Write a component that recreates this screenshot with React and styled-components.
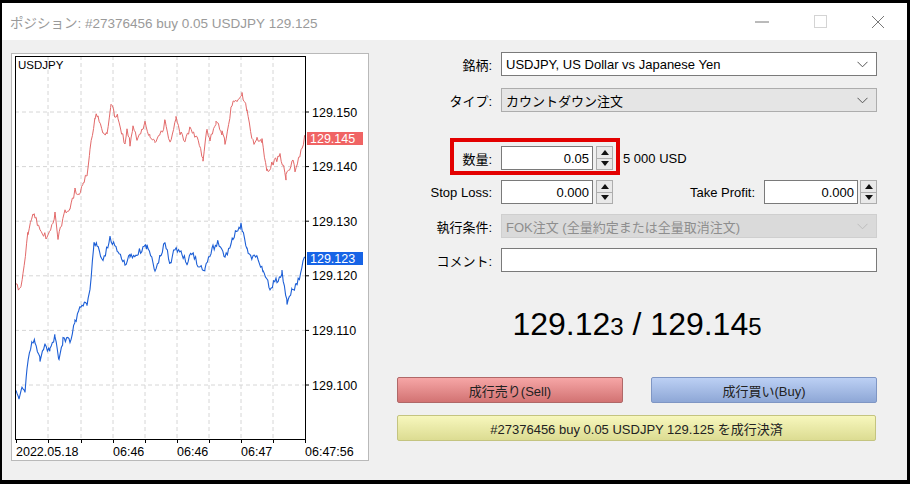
import React from "react";
import styled, { createGlobalStyle } from "styled-components";

const GlobalStyle = createGlobalStyle`
  html, body { margin: 0; padding: 0; background: #000; }
  body {
    font-family: "Liberation Sans", "Noto Sans CJK JP", sans-serif;
    font-size: 12.5px;
    color: #000;
  }
`;

// chart keypoints in page coordinates (x, y)
const RED = [[16,287],[21,287],[23,275],[28,233],[33,215],[35,215],[40,232],[47,237],[55,215],[58,240],[65,210],[70,210],[75,190],[78,197],[83,182],[87,175],[90,147],[95,117],[98,117],[104,133],[107,133],[111,106],[115,115],[118,118],[125,143],[127,128],[130,143],[133,128],[137,138],[142,128],[145,123],[150,137],[155,143],[160,137],[165,122],[170,143],[176,117],[180,133],[185,140],[190,128],[197,137],[203,158],[207,128],[210,140],[216,122],[222,132],[225,143],[232,103],[237,100],[242,94],[247,110],[254,147],[257,138],[262,140],[267,170],[272,165],[280,155],[286,177],[293,160],[295,172],[305,137]];
const BLUE = [[16,390],[19,402],[22,390],[25,390],[27,367],[32,342],[35,342],[40,360],[45,347],[50,350],[55,337],[59,362],[63,340],[70,340],[75,323],[82,303],[87,303],[90,288],[94,242],[97,245],[103,263],[110,237],[118,253],[125,263],[130,257],[137,253],[147,247],[155,268],[160,258],[165,242],[170,263],[175,248],[182,253],[187,263],[192,253],[200,268],[205,268],[213,248],[218,242],[225,258],[233,237],[241,226],[247,250],[252,260],[257,253],[263,273],[270,287],[277,280],[282,273],[287,302],[292,290],[297,285],[305,257]];

function rng(seed) {
  let a = seed;
  return () => {
    a |= 0; a = (a + 0x6d2b79f5) | 0;
    let t = Math.imul(a ^ (a >>> 15), 1 | a);
    t = (t + Math.imul(t ^ (t >>> 7), 61 | t)) ^ t;
    return ((t ^ (t >>> 14)) >>> 0) / 4294967296;
  };
}

function jagged(points, seed) {
  const r = rng(seed);
  const out = [];
  for (let i = 0; i < points.length - 1; i++) {
    const [x0, y0] = points[i];
    const [x1, y1] = points[i + 1];
    for (let x = x0; x < x1; x += 1.2) {
      const t = (x - x0) / (x1 - x0);
      const y = y0 + (y1 - y0) * t + (r() - 0.5) * 6.5;
      out.push(`${x.toFixed(1)},${y.toFixed(1)}`);
    }
  }
  const last = points[points.length - 1];
  out.push(`${last[0]},${last[1]}`);
  return out.join(" ");
}

const redLine = jagged(RED, 7);
const blueLine = jagged(BLUE, 13);

const PRICES = ["129.150", "129.140", "129.130", "129.120", "129.110", "129.100"];
const priceY = (p) => 112 + (129.15 - p) * 5460;
const VGRID = [48, 81, 113, 145, 177, 209, 241, 273];
const TIMES = [
  { x: 16, t: "2022.05.18" },
  { x: 113, t: "06:46" },
  { x: 177, t: "06:46" },
  { x: 241, t: "06:47" },
  { x: 305, t: "06:47:56" },
];

const Screen = styled.div`
  width: 910px;
  height: 484px;
  box-sizing: border-box;
  padding: 3px 3px 4px 2px;
  background: #000;
`;

const Window = styled.div`
  width: 905px;
  height: 477px;
  background: #f0f0f0;
  display: flex;
  flex-direction: column;
`;

const TitleBar = styled.div`
  height: 37px;
  background: #fff;
  display: flex;
  align-items: center;
`;

const Title = styled.div`
  flex: 1;
  padding-left: 8px;
  font-size: 13.5px;
  color: #9a9a9a;
`;

const WinButton = styled.div`
  width: 58px;
  height: 37px;
  display: flex;
  align-items: center;
  justify-content: center;
`;

const Body = styled.div`
  display: flex;
  gap: 28px;
  padding: 12px 30px 0 9px;
`;

const ChartPanel = styled.div`
  width: 358px;
  height: 408px;
  margin-top: 1px;
  box-sizing: border-box;
  border: 1px solid #b9b9b9;
  background: #fff;
  svg { display: block; }
`;

const RightPanel = styled.div`
  width: 480px;
  display: flex;
  flex-direction: column;
`;

const Row = styled.div`
  position: relative;
  display: flex;
  align-items: center;
  height: 24px;
  margin-top: ${(p) => p.$top || 0}px;
`;

const Label = styled.div`
  width: 95px;
  flex-shrink: 0;
  text-align: right;
  margin-right: 9px;
  font-size: 13px;
  white-space: nowrap;
`;

const Field = styled.div`
  flex: 1;
  height: 24px;
  box-sizing: border-box;
  display: flex;
  align-items: center;
  padding: 0 8px 0 4px;
  border: 1px solid ${(p) => (p.$variant === "disabled" ? "#cfcfcf" : p.$variant === "gray" ? "#adadad" : "#7a7a7a")};
  background: ${(p) => (p.$variant === "disabled" ? "#dadada" : p.$variant === "gray" ? "#e5e5e5" : "#fff")};
  color: ${(p) => (p.$variant === "disabled" ? "#8e8e8e" : "#000")};
  font-size: 13px;
  span { flex: 1; white-space: nowrap; }
`;

const NumInput = styled.div`
  width: ${(p) => p.$w}px;
  height: 24px;
  box-sizing: border-box;
  border: 1px solid #7a7a7a;
  background: #fff;
  display: flex;
  align-items: center;
  justify-content: flex-end;
  padding-right: 3px;
  font-size: 13px;
`;

const SpinBox = styled.div`
  width: 17px;
  height: 24px;
  margin-left: ${(p) => p.$gap}px;
  box-sizing: border-box;
  border: 1px solid #adadad;
  background: #e9e9e9;
  display: flex;
  flex-direction: column;
`;

const SpinHalf = styled.div`
  flex: 1;
  display: flex;
  align-items: center;
  justify-content: center;
  & + & { border-top: 1px solid #adadad; }
`;

const Note = styled.div`
  margin-left: 10px;
  font-size: 13px;
`;

const Spacer = styled.div`
  flex: 1;
  text-align: right;
  margin-right: 9px;
  font-size: 13px;
`;

const Highlight = styled.div`
  position: absolute;
  left: 53px;
  top: -8px;
  width: 170px;
  height: 37px;
  box-sizing: border-box;
  border: 4px solid #e30000;
  pointer-events: none;
`;

const Quote = styled.div`
  margin-top: 33px;
  height: 38px;
  line-height: 38px;
  text-align: center;
  font-size: 32px;
  white-space: pre;
  small { font-size: 24px; }
`;

const ButtonRow = styled.div`
  display: flex;
  gap: 28px;
  margin-top: 34px;
`;

const TradeButton = styled.div`
  flex: 1;
  height: 26px;
  box-sizing: border-box;
  border-radius: 2px;
  display: flex;
  align-items: center;
  justify-content: center;
  font-size: 13px;
  color: #222;
  border: 1px solid ${(p) => p.$border};
  background: linear-gradient(${(p) => p.$top}, ${(p) => p.$bottom});
`;

const CloseButton = styled(TradeButton)`
  flex: none;
  margin-top: 12px;
  width: 479px;
`;

const Chevron = ({ color = "#555" }) => (
  <svg width="11" height="7" viewBox="0 0 11 7">
    <path d="M0.5 0.8 L5.5 5.8 L10.5 0.8" fill="none" stroke={color} strokeWidth="1" />
  </svg>
);

const Spinner = ({ gap = 3 }) => (
  <SpinBox $gap={gap}>
    <SpinHalf>
      <svg width="8" height="5" viewBox="0 0 8 5"><path d="M4 0 L8 5 L0 5 Z" fill="#111" /></svg>
    </SpinHalf>
    <SpinHalf>
      <svg width="8" height="5" viewBox="0 0 8 5"><path d="M0 0 L8 0 L4 5 Z" fill="#111" /></svg>
    </SpinHalf>
  </SpinBox>
);

function Chart() {
  return (
    <svg width="356" height="406" viewBox="12 54 356 406" fontFamily="Liberation Sans, sans-serif" fontSize="12.5">
      {PRICES.map((p) => (
        <line key={p} x1="15" x2="305" y1={priceY(+p)} y2={priceY(+p)} stroke="#d6d6d6" strokeDasharray="4 3" />
      ))}
      {VGRID.map((x) => (
        <line key={x} x1={x} x2={x} y1="56" y2="439" stroke="#d6d6d6" strokeDasharray="4 3" />
      ))}
      <polyline points={redLine} fill="none" stroke="#e36a6a" strokeWidth="1" />
      <polyline points={blueLine} fill="none" stroke="#1d5fd6" strokeWidth="1.1" />
      <rect x="15.5" y="56.5" width="290" height="383" fill="none" stroke="#000" />
      <text x="18" y="69" fontSize="11.5">USDJPY</text>
      {PRICES.map((p) => (
        <g key={p}>
          <line x1="305" x2="309" y1={priceY(+p)} y2={priceY(+p)} stroke="#000" />
          <text x="312" y={priceY(+p) + 4.5}>{p}</text>
        </g>
      ))}
      <rect x="307" y="132" width="56" height="13" fill="#f06464" />
      <text x="310" y="143" fill="#fff">129.145</text>
      <rect x="307" y="252" width="56" height="13" fill="#1764e6" />
      <text x="310" y="263" fill="#fff">129.123</text>
      {[16, ...VGRID, 305].map((x) => (
        <line key={x} x1={x + 0.5} x2={x + 0.5} y1="439" y2="443" stroke="#000" />
      ))}
      {TIMES.map((t, i) => (
        <text key={i} x={t.x} y="456">{t.t}</text>
      ))}
    </svg>
  );
}

export default function App() {
  return (
    <>
      <GlobalStyle />
      <Screen>
        <Window>
          <TitleBar>
            <Title>ポジション: #27376456 buy 0.05 USDJPY 129.125</Title>
            <WinButton>
              <svg width="14" height="2" viewBox="0 0 14 2"><line x1="0" x2="14" y1="1" y2="1" stroke="#777" /></svg>
            </WinButton>
            <WinButton>
              <svg width="13" height="13" viewBox="0 0 13 13"><rect x="0.5" y="0.5" width="12" height="12" fill="none" stroke="#d4d4d4" /></svg>
            </WinButton>
            <WinButton>
              <svg width="14" height="14" viewBox="0 0 14 14"><path d="M1 1 L13 13 M13 1 L1 13" stroke="#777" strokeWidth="1" /></svg>
            </WinButton>
          </TitleBar>
          <Body>
            <ChartPanel>
              <Chart />
            </ChartPanel>
            <RightPanel>
              <Row>
                <Label>銘柄:</Label>
                <Field><span>USDJPY, US Dollar vs Japanese Yen</span><Chevron /></Field>
              </Row>
              <Row $top={12}>
                <Label>タイプ:</Label>
                <Field $variant="gray"><span>カウントダウン注文</span><Chevron /></Field>
              </Row>
              <Row $top={34}>
                <Label>数量:</Label>
                <NumInput $w={92}>0.05</NumInput>
                <Spinner />
                <Note>5 000 USD</Note>
                <Highlight />
              </Row>
              <Row $top={10}>
                <Label>Stop Loss:</Label>
                <NumInput $w={92}>0.000</NumInput>
                <Spinner />
                <Spacer>Take Profit:</Spacer>
                <NumInput $w={94}>0.000</NumInput>
                <Spinner gap={2} />
              </Row>
              <Row $top={10}>
                <Label>執行条件:</Label>
                <Field $variant="disabled"><span>FOK注文 (全量約定または全量取消注文)</span><Chevron color="#bdbdbd" /></Field>
              </Row>
              <Row $top={10}>
                <Label>コメント:</Label>
                <Field />
              </Row>
              <Quote>129.12<small>3</small> / 129.14<small>5</small></Quote>
              <ButtonRow>
                <TradeButton $border="#b06868" $top="#f6a6a6" $bottom="#d27373">成行売り(Sell)</TradeButton>
                <TradeButton $border="#7f96c4" $top="#bcd0f4" $bottom="#8ea7d6">成行買い(Buy)</TradeButton>
              </ButtonRow>
              <CloseButton $border="#c4c480" $top="#f7f7bd" $bottom="#dcdc92">#27376456 buy 0.05 USDJPY 129.125 を成行決済</CloseButton>
            </RightPanel>
          </Body>
        </Window>
      </Screen>
    </>
  );
}
